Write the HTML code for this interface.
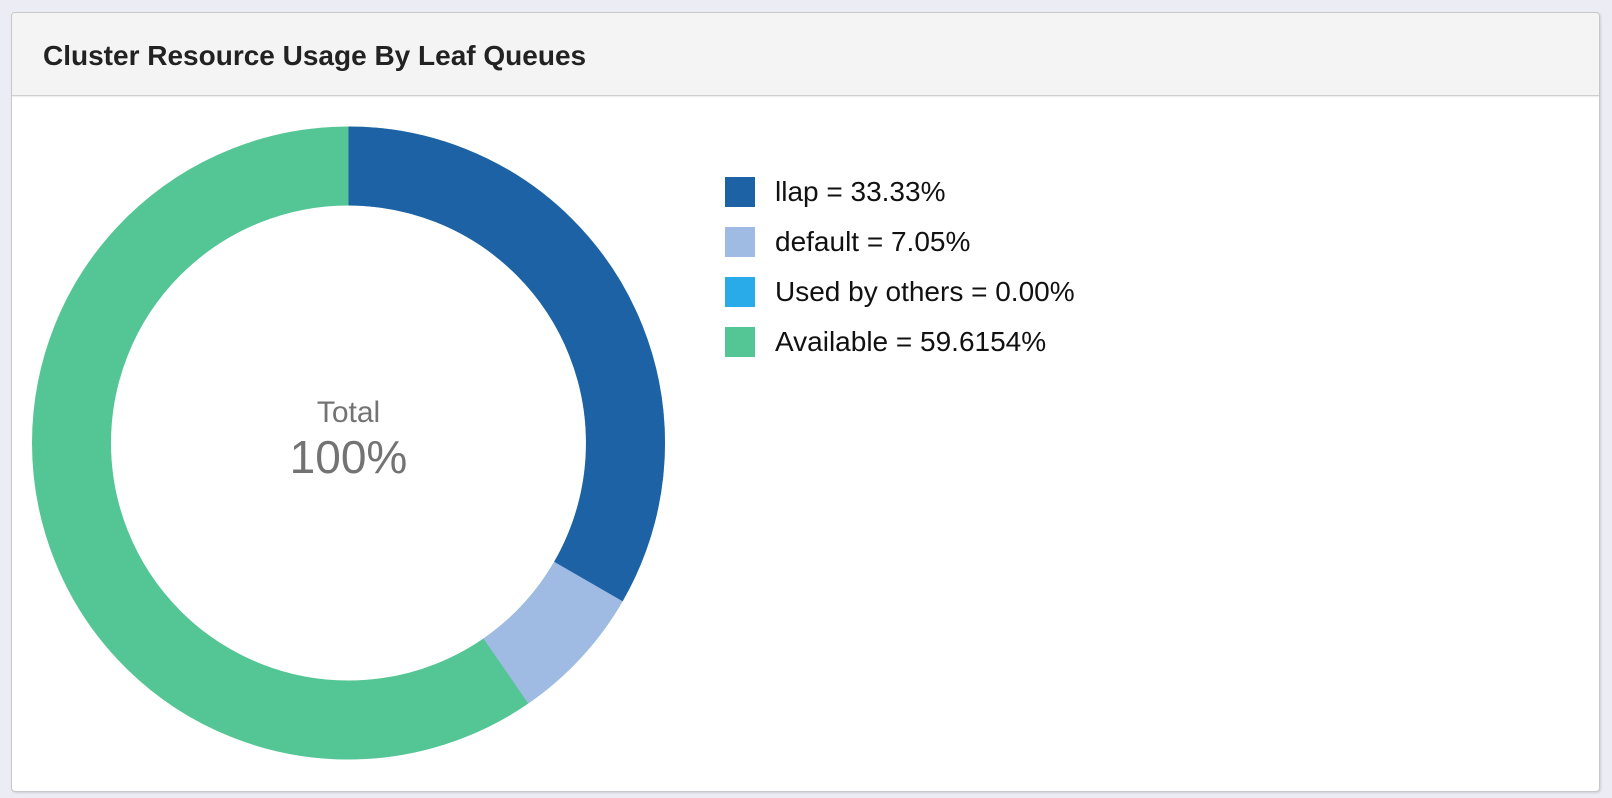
<!DOCTYPE html>
<html><head><style>
body{margin:0;width:1612px;height:798px;background:#ececf5;font-family:"Liberation Sans",Arial,sans-serif;position:relative;overflow:hidden}
.panel{position:absolute;left:11px;top:12px;width:1587px;height:778px;background:#fff;border:1px solid #c8c8cc;border-radius:4px;box-shadow:1px 1px 2px rgba(0,0,0,.12)}
.hdr{height:82px;background:#f4f4f4;border-bottom:1px solid #cfcfd2;border-radius:4px 4px 0 0;box-shadow:0 1px 1px rgba(0,0,0,.08)}
.hdr span{position:absolute;left:31px;top:27px;font-size:28px;line-height:32px;font-weight:bold;color:#222}
.leg{position:absolute;left:725px;font-size:28px;color:#111;line-height:30px;white-space:nowrap}
.leg i{display:inline-block;width:30px;height:30px;vertical-align:top;margin-right:20px}
</style></head><body>
<div class="panel"><div class="hdr"><span>Cluster Resource Usage By Leaf Queues</span></div></div>
<svg style="position:absolute;left:0;top:0" width="1612" height="798">
<g transform="rotate(-90 348.5 443)" fill="none" stroke-width="79">
<circle cx="348.5" cy="443" r="277" stroke="#54c594"/>
<circle cx="348.5" cy="443" r="277" stroke="#a0bbe3" stroke-dasharray="702.8 2000"/>
<circle cx="348.5" cy="443" r="277" stroke="#1c62a5" stroke-dasharray="580.1 2000"/>
</g>
<text x="348.5" y="422" text-anchor="middle" font-family="Liberation Sans,Arial,sans-serif" font-size="30" fill="#737373">Total</text>
<text x="348.5" y="473" text-anchor="middle" font-family="Liberation Sans,Arial,sans-serif" font-size="46" fill="#737373">100%</text>
</svg>
<div class="leg" style="top:177px"><i style="background:#1c62a5"></i>llap = 33.33%</div>
<div class="leg" style="top:227px"><i style="background:#a0bbe3"></i>default = 7.05%</div>
<div class="leg" style="top:277px"><i style="background:#29aae9"></i>Used by others = 0.00%</div>
<div class="leg" style="top:327px"><i style="background:#54c594"></i>Available = 59.6154%</div>
</body></html>
